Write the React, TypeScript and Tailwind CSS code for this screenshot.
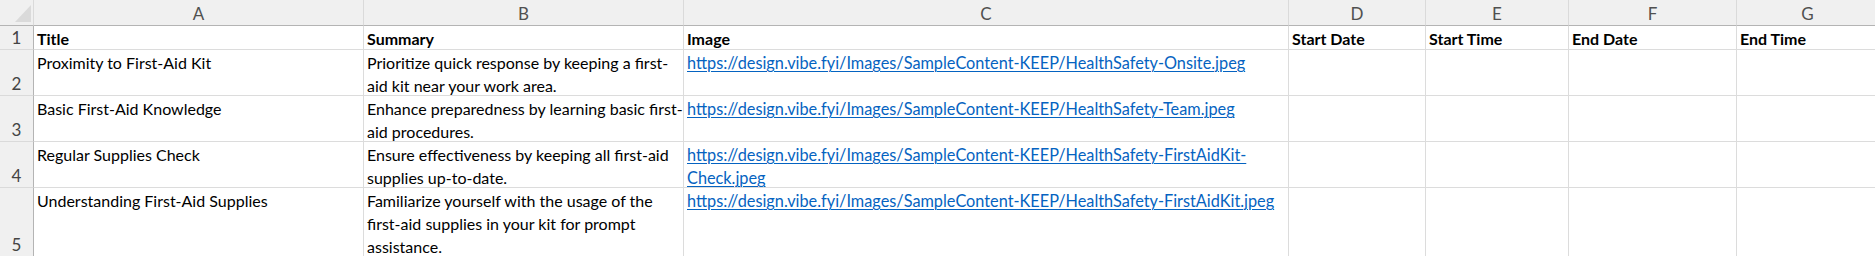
const cols = [
  { label: "A", w: "w-[330px]" },
  { label: "B", w: "w-[320px]" },
  { label: "C", w: "w-[605px]" },
  { label: "D", w: "w-[137px]" },
  { label: "E", w: "w-[143px]" },
  { label: "F", w: "w-[168px]" },
  { label: "G", w: "w-[142px]" },
];

const headers = ["Title", "Summary", "Image", "Start Date", "Start Time", "End Date", "End Time"];

const base = "https://design.vibe.fyi/Images/SampleContent-KEEP/";

const rows = [
  {
    n: 2,
    h: "h-[46px]",
    title: "Proximity to First-Aid Kit",
    summary: ["Prioritize quick response by keeping a first-", "aid kit near your work area."],
    url: [base + "HealthSafety-Onsite.jpeg"],
  },
  {
    n: 3,
    h: "h-[46px]",
    title: "Basic First-Aid Knowledge",
    summary: ["Enhance preparedness by learning basic first-", "aid procedures."],
    url: [base + "HealthSafety-Team.jpeg"],
  },
  {
    n: 4,
    h: "h-[46px]",
    title: "Regular Supplies Check",
    summary: ["Ensure effectiveness by keeping all first-aid", "supplies up-to-date."],
    url: [base + "HealthSafety-FirstAidKit-", "Check.jpeg"],
  },
  {
    n: 5,
    h: "h-[69px]",
    title: "Understanding First-Aid Supplies",
    summary: [
      "Familiarize yourself with the usage of the",
      "first-aid supplies in your kit for prompt",
      "assistance.",
    ],
    url: [base + "HealthSafety-FirstAidKit.jpeg"],
  },
];

const cell = "shrink-0 border-r border-b border-[#dcdcdc] pl-[3px] pt-px leading-[23px] overflow-hidden whitespace-nowrap";
const rowHead =
  "w-[34px] shrink-0 flex items-end justify-center bg-[#f0f0f0] border-r border-r-[#b4b4b4] border-b border-b-[#dadada] text-[#444] text-[17px] leading-[23px]";

export default function App() {
  return (
    <div
      className="w-[1875px] h-[256px] overflow-hidden bg-white text-[16px] text-black"
      style={{ fontFamily: "Lato, 'Open Sans', sans-serif" }}
    >
      {/* column letters */}
      <div className="flex h-[26px]">
        <div className="relative w-[34px] shrink-0 bg-[#f0f0f0] border-r border-[#dadada] border-b border-b-[#b4b4b4]">
          <svg className="absolute left-[15px] top-[5px]" width="16" height="17" viewBox="0 0 16 17">
            <polygon points="16,0 16,17 0,17" fill="#dadada" />
          </svg>
        </div>
        {cols.map((c) => (
          <div
            key={c.label}
            className={`${c.w} shrink-0 flex items-center justify-center pt-[2px] bg-[#f0f0f0] border-r border-[#dadada] border-b border-b-[#b4b4b4] text-[17px] text-[#505050]`}
          >
            {c.label}
          </div>
        ))}
      </div>

      {/* header row */}
      <div className="flex h-[24px]">
        <div className={rowHead}>1</div>
        {cols.map((c, i) => (
          <div key={c.label} className={`${c.w} ${cell} font-bold`}>
            {headers[i]}
          </div>
        ))}
      </div>

      {rows.map((r) => (
        <div key={r.n} className={`flex ${r.h}`}>
          <div className={rowHead}>{r.n}</div>
          <div className={`${cols[0].w} ${cell}`}>{r.title}</div>
          <div className={`${cols[1].w} ${cell}`}>
            {r.summary.map((s) => (
              <div key={s}>{s}</div>
            ))}
          </div>
          <div className={`${cols[2].w} ${cell}`}>
            {r.url.map((u) => (
              <div key={u}>
                <a href="#" className="text-[16.3px] text-[#0563c1] underline underline-offset-2 decoration-1">
                  {u}
                </a>
              </div>
            ))}
          </div>
          {cols.slice(3).map((c) => (
            <div key={c.label} className={`${c.w} ${cell}`} />
          ))}
        </div>
      ))}
    </div>
  );
}
